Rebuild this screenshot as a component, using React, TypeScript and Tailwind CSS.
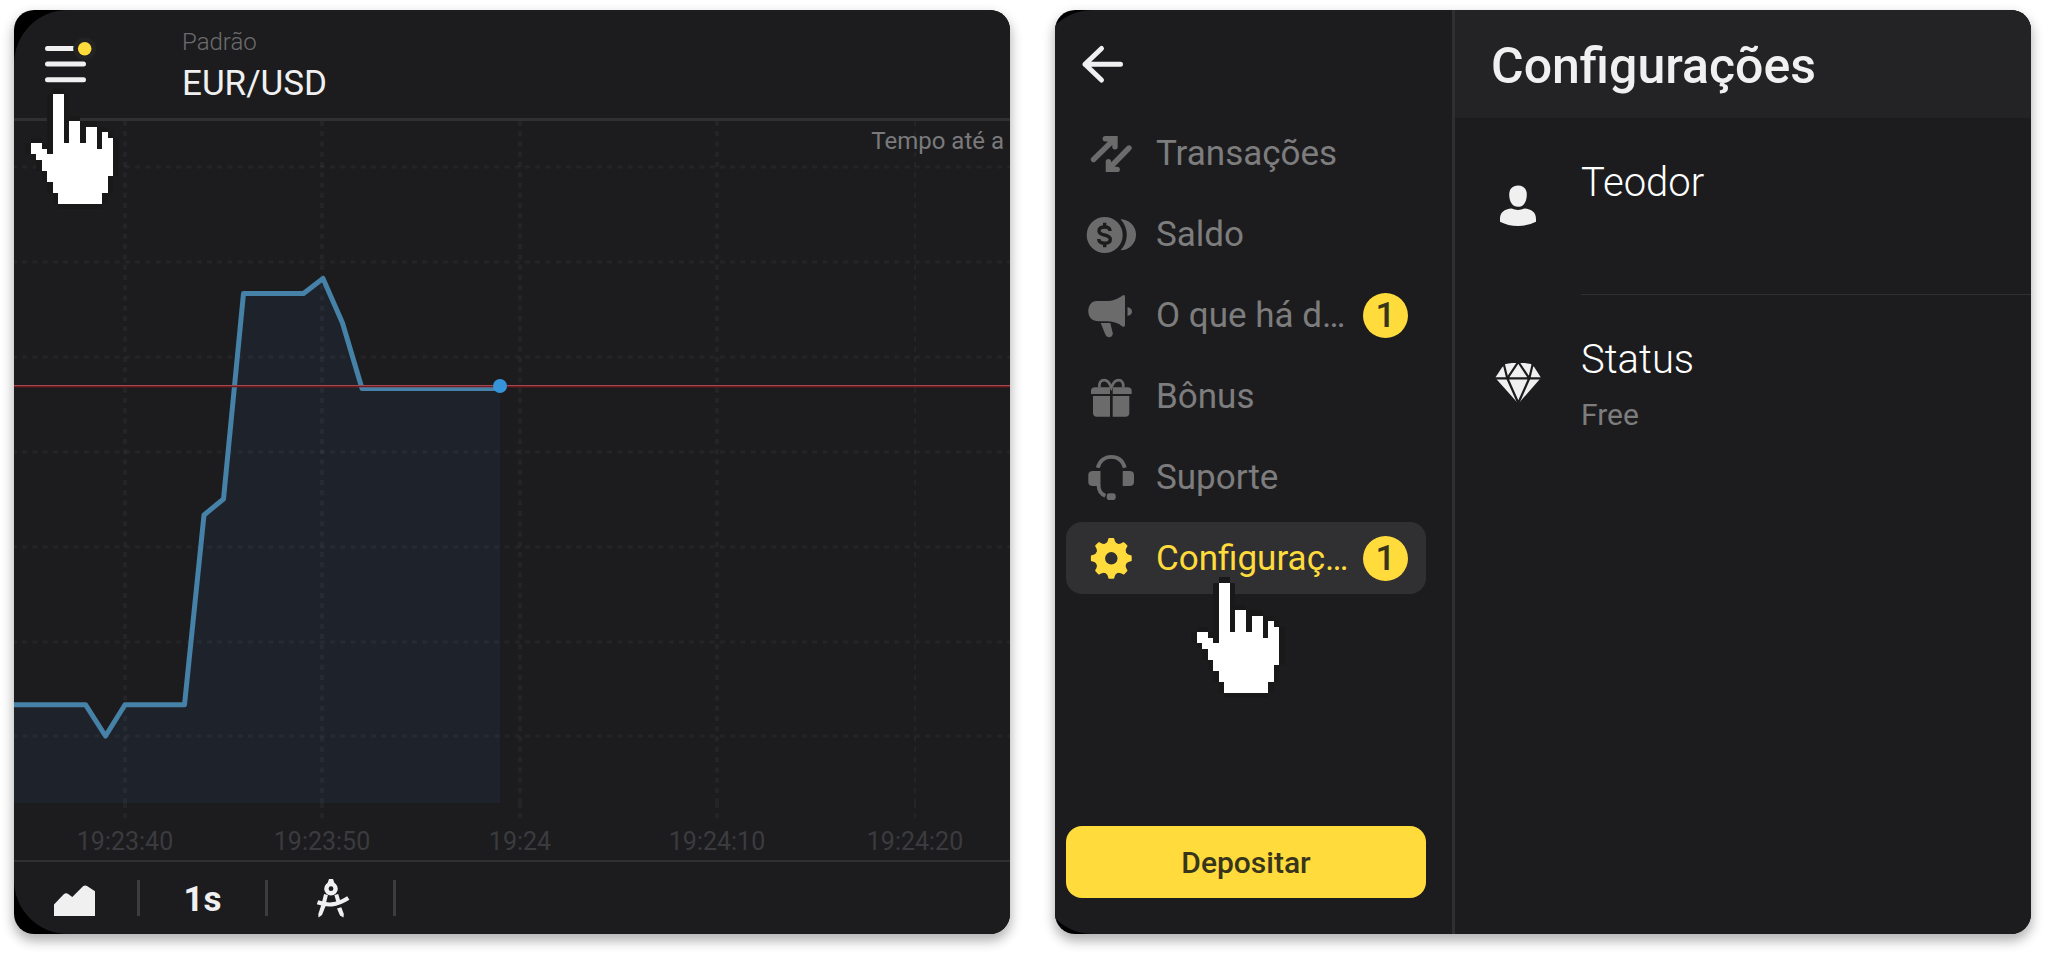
import type { ReactNode } from "react"

const TIMES = [
  { x: 111, label: "19:23:40", width: 4 },
  { x: 308, label: "19:23:50", width: 4 },
  { x: 506, label: "19:24", width: 4 },
  { x: 703, label: "19:24:10", width: 4 },
  { x: 901, label: "19:24:20", width: 2 },
]

const LEVELS = [46, 141, 236, 331, 426, 521, 615]

const PRICE =
  "0,583.7 71.5,583.7 91.5,615 111,583.7 170.5,583.7 190,394 209.5,378 229.5,172.5 289.5,172.5 309,157.5 328.5,202 348,267.5 486,267.5"

export default function App() {
  return (
    <main className="flex min-h-screen gap-[45px] bg-white pt-[10px] pr-[17px] pb-[21px] pl-[14px] font-[Roboto,sans-serif]">
      <Card className="flex-[996]">
        <div className="flex flex-1 flex-col overflow-hidden rounded-l-[54px] bg-[#1c1c1e]">
          <ChartHeader />
          <PriceChart />
          <ChartToolbar />
        </div>
        <HandPointer className="top-[78px] left-[11px]" />
      </Card>
      <Card className="flex-[976]">
        <div className="-ml-4 flex flex-1 overflow-hidden rounded-l-[54px] bg-[#1c1c1e] pl-4">
          <Sidebar />
          <Settings />
        </div>
        <HandPointer className="top-[567px] left-[136px]" />
      </Card>
    </main>
  )
}

function Card({
  className,
  children,
}: {
  className: string
  children: ReactNode
}) {
  return (
    <section
      className={`relative flex min-w-0 basis-0 rounded-[20px] shadow-[0_6px_12px_1px_rgba(0,0,0,0.3)] ${className}`}
    >
      <div className="flex min-w-0 flex-1 overflow-hidden rounded-[20px] bg-black">
        {children}
      </div>
    </section>
  )
}

function ChartHeader() {
  return (
    <header className="flex h-[111px] items-start border-b-[3px] border-[#303032] pt-[18px] pl-[31px]">
      <button aria-label="Menu" className="mt-[9px] cursor-pointer">
        <svg width="52" height="48" viewBox="0 0 52 48">
          <g stroke="#f0f0f1" strokeWidth="5" strokeLinecap="round">
            <path d="M2.5 11.5H30M2.5 27H38.5M2.5 42.7H38.5" />
          </g>
          <circle cx="39.7" cy="11.7" r="11.5" fill="#232324" />
          <circle cx="39.7" cy="11.7" r="6.8" fill="#ffdb3b" />
        </svg>
      </button>
      <div className="ml-[85px]">
        <p className="text-[24px] leading-[28px] font-light text-[#6c6c6e]">
          Padrão
        </p>
        <h1 className="mt-2 text-[35px] leading-[40px] text-[#f0f0f1]">
          EUR/USD
        </h1>
      </div>
    </header>
  )
}

function PriceChart() {
  return (
    <div className="relative min-h-[739px] flex-1">
      <svg
        className="absolute inset-0 size-full"
        viewBox="0 0 996 739"
        preserveAspectRatio="xMinYMin slice"
      >
        <polygon points={`0,682 ${PRICE} 486,682`} fill="#1e232b" />

        {/* grid */}
        <g stroke="#fff" strokeOpacity="0.04" strokeDasharray="5 5.26">
          {LEVELS.map((y) => (
            <line
              key={y}
              x1="-2"
              x2="996"
              y1={y}
              y2={y}
              strokeWidth="3"
            />
          ))}
          {TIMES.map(({ x, width }) => (
            <g key={x} strokeWidth={width}>
              <line x1={x} x2={x} y1="0" y2="682" />
              <line x1={x} x2={x} y1="682" y2="698" />
            </g>
          ))}
        </g>

        <polyline
          points={PRICE}
          fill="none"
          stroke="#4681a8"
          strokeWidth="5"
          strokeLinejoin="round"
        />

        {/* current price */}
        <rect y="264" width="996" height="1" fill="#a1494f" />
        <rect y="265" width="996" height="1" fill="#6d1c21" />
        <rect y="266" width="996" height="1" fill="#8a1c21" opacity="0.3" />
        <circle cx="486" cy="265" r="7" fill="#3694da" />

        <g fill="#3b3b3f" fontSize="25" textAnchor="middle">
          {TIMES.map(({ x, label }) => (
            <text key={label} x={x} y="729">
              {label}
            </text>
          ))}
        </g>
      </svg>
      <p className="relative pt-1.5 pr-[6px] text-right text-[24px] leading-[28px] text-[#7a7a7c]">
        Tempo até a
      </p>
    </div>
  )
}

function ChartToolbar() {
  return (
    <footer className="flex h-[74px] items-center border-t-2 border-[#303032] text-[#f0f0f1]">
      <button
        aria-label="Tipo de gráfico"
        className="flex h-9 w-[126px] cursor-pointer items-center justify-center border-r-[3px] border-[#3c3c3e] pr-0.5"
      >
        <svg width="42" height="36" viewBox="0 0 42 36" fill="currentColor">
          <path d="M0 24.5L9.5 14.5Q12 12.5 14.2 14L18.3 17L29 6.3Q31 5 33 6L41 11.3V36H0Z" />
        </svg>
      </button>
      <button className="flex h-9 w-[128px] cursor-pointer items-center justify-center border-r-[3px] border-[#3c3c3e] pt-1 text-[35px] leading-[40px] font-bold">
        1s
      </button>
      <button
        aria-label="Desenho"
        className="flex h-9 w-[128px] cursor-pointer items-center justify-center border-r-[3px] border-[#3c3c3e]"
      >
        <svg
          width="40"
          height="42"
          viewBox="-2 0 40 42"
          fill="none"
          stroke="currentColor"
        >
          <path d="M16 2H20L22.5 9H13.5Z" fill="currentColor" stroke="none" />
          <circle cx="18" cy="11.7" r="4.6" strokeWidth="4.4" />
          <path d="M13 17.5L11 25.5M23.3 17.5L25.5 25" strokeWidth="4" />
          <path d="M4.5 25.3Q12 28 19 27.4T35.3 21" strokeWidth="4.2" />
          <path
            d="M8.3 28L12.6 29L9 38L5.5 40.5L5.3 37Z M24 31.5L28.3 30.3L30.8 37L30.5 40.5L27 38.6Z"
            fill="currentColor"
            stroke="none"
          />
        </svg>
      </button>
    </footer>
  )
}

function Sidebar() {
  return (
    <aside className="flex w-[400px] shrink-0 flex-col border-r-[3px] border-[#2f2f31] pr-[26px] pl-[11px]">
      <div className="flex h-[107px] items-center pl-[15px]">
        <button aria-label="Voltar" className="cursor-pointer">
          <svg
            width="44"
            height="40"
            viewBox="0 0 44 40"
            fill="none"
            stroke="#f0f0f1"
            strokeWidth="5"
            strokeLinecap="round"
            strokeLinejoin="round"
          >
            <path d="M4 20.3H39.5M20.5 4.5L4 20.3L20.5 36" />
            <path d="M4 20.3L9 16V24.6Z" fill="#f0f0f1" strokeWidth="1" />
          </svg>
        </button>
      </div>
      <nav className="flex flex-col gap-[9px]">
        <NavItem icon={<TransfersIcon />} label="Transações" />
        <NavItem icon={<CoinsIcon />} label="Saldo" />
        <NavItem icon={<MegaphoneIcon />} label="O que há d…" badge={1} />
        <NavItem icon={<GiftIcon />} label="Bônus" />
        <NavItem icon={<HeadsetIcon />} label="Suporte" />
        <NavItem icon={<GearIcon />} label="Configuraç…" badge={1} active />
      </nav>
      <button className="mt-auto mb-9 h-[72px] cursor-pointer rounded-[16px] bg-[#ffdb3b] pt-0.5 text-[30px] leading-[36px] font-medium text-[#38351d]">
        Depositar
      </button>
    </aside>
  )
}

function NavItem({
  icon,
  label,
  badge,
  active = false,
}: {
  icon: ReactNode
  label: string
  badge?: number
  active?: boolean
}) {
  return (
    <a
      href="#"
      className={`flex h-[72px] items-center rounded-[16px] pr-[18px] pl-5 text-[35px] leading-[40px] ${
        active ? "bg-[#303032] text-[#ffdb3b]" : "text-[#7d7d7e]"
      }`}
    >
      <span className={active ? "" : "text-[#6b6b6c]"}>{icon}</span>
      <span className="ml-5 flex-1 pt-0.5 whitespace-nowrap">{label}</span>
      {badge && (
        <span className="flex size-[45px] items-center justify-center rounded-full bg-[#ffdb3b] pt-0.5 font-medium text-[#38351d]">
          {badge}
        </span>
      )}
    </a>
  )
}

function Settings() {
  return (
    <div className="min-w-0 flex-1">
      <header className="flex h-[108px] items-center bg-[#232325] pt-1 pl-9">
        <h2 className="text-[50px] leading-[56px] font-medium text-[#f0f0f1]">
          Configurações
        </h2>
      </header>
      <SettingsRow icon={<PersonIcon />} title="Teodor" divider />
      <SettingsRow icon={<DiamondIcon />} title="Status" text="Free" />
    </div>
  )
}

function SettingsRow({
  icon,
  title,
  text,
  divider = false,
}: {
  icon: ReactNode
  title: string
  text?: string
  divider?: boolean
}) {
  return (
    <div className="flex h-[177px] items-center pl-[39px]">
      {icon}
      <div
        className={`ml-[39px] flex-1 self-stretch border-b pt-[41px] ${
          divider ? "border-[#303032]" : "border-transparent"
        }`}
      >
        <p className="text-[40px] leading-[48px] font-light text-white">
          {title}
        </p>
        {text && (
          <p className="mt-[11px] text-[30px] leading-[40px] text-[#7d7d7e]">
            {text}
          </p>
        )}
      </div>
    </div>
  )
}

function Icon({ children }: { children: ReactNode }) {
  return (
    <svg width="50" height="50" viewBox="0 0 50 50" fill="currentColor">
      {children}
    </svg>
  )
}

function TransfersIcon() {
  return (
    <Icon>
      <g
        fill="none"
        stroke="currentColor"
        strokeWidth="5.4"
        strokeLinecap="round"
      >
        <path d="M7.5 31.5L28.5 11M19.3 10.7H29V18.8" />
        <path d="M43 20L23 40.5M22.4 33.8V41.4H31.2" />
      </g>
    </Icon>
  )
}

function CoinsIcon() {
  return (
    <Icon>
      <circle cx="18.7" cy="26" r="18" />
      <path d="M34.5 10.3A15.5 15.5 0 0 1 34.5 41.3A22.3 22.3 0 0 0 34.5 10.3Z" />
      <path
        d="M18.7 13.7V18M18.7 34V38.3M24 22C24 19.3 21.8 18 18.5 18S13 19.5 13 21.9S15.5 25.2 18.5 26S24.3 27.6 24.3 30.2S22 34.2 18.7 34.2S12.7 33 12.7 30"
        fill="none"
        stroke="#1c1c1e"
        strokeWidth="3.4"
      />
    </Icon>
  )
}

function MegaphoneIcon() {
  return (
    <Icon>
      <path d="M11 11H20C27 11 32 8.5 36.5 5.4Q39 4 39 7V35Q39 37.6 36.3 36.4C32 33 27 31.3 20 31.3H13C6 31.3 2.3 27 2.3 21.5S5 11 11 11Z" />
      <path d="M14.7 33H24.3L26.8 43.5Q26.6 47 22.8 47.3Q20.5 47 19.3 44.5Z" />
      <path d="M41.5 17Q46 18 46 21.5T41.5 26Z" />
    </Icon>
  )
}

function GiftIcon() {
  return (
    <Icon>
      <path d="M5 23V20Q5 16.3 9 16.3H24V23ZM26.7 23V16.3H41.7Q45.7 16.3 45.7 20V23Z" />
      <path d="M7 25H24V45.7H11Q7 45.7 7 41.7ZM26.7 25H43.3V41.7Q43.3 45.7 39.3 45.7H26.7Z" />
      <path
        d="M13.5 16.5C12.5 11.5 15 9.2 18.3 9.2S23.5 11.8 25.3 16.5C27.2 11.8 29 9.2 32.3 9.2S38 11.5 37.2 16.5"
        fill="none"
        stroke="currentColor"
        strokeWidth="2.8"
      />
    </Icon>
  )
}

function HeadsetIcon() {
  return (
    <Icon>
      <g fill="none" stroke="currentColor" strokeWidth="3.8">
        <path d="M11.8 15.8C13.5 9 18.5 4.8 25.3 4.8S37 9 38.8 15.8" />
        <path d="M12.5 33C12.5 38.5 15 42 19.3 43.8" />
      </g>
      <path d="M7 19H14.5V34H7Q2.3 34 2.3 30V23Q2.3 19 7 19Z" />
      <path d="M36.7 19H43.5Q48 19 48 23V30Q48 34 43.5 34H36.7Z" />
      <rect x="20.7" y="41.3" width="9" height="6.7" rx="2.8" />
    </Icon>
  )
}

function GearIcon() {
  return (
    <Icon>
      <g transform="translate(25.3 25.3)">
        {[0, 45, 90, 135, 180, 225, 270, 315].map((angle) => (
          <path
            key={angle}
            d="M-7 -14Q-3.6 -15.5 -3 -19.6Q-2.8 -20.4 -2 -20.4H2Q2.8 -20.4 3 -19.6Q3.6 -15.5 7 -14Z"
            transform={`rotate(${angle})`}
          />
        ))}
        <circle r="11" fill="none" stroke="currentColor" strokeWidth="9.5" />
      </g>
    </Icon>
  )
}

function PersonIcon() {
  return (
    <svg width="48" height="48" viewBox="-2 1 48 48" fill="#f0f0f1">
      <path d="M22 3.5C27.5 3.5 30.8 7 30.8 12.5C30.8 20 27.3 24.8 22 24.8S13.2 20 13.2 12.5C13.2 7 16.5 3.5 22 3.5Z" />
      <path d="M4 39.7V37C4 30.5 8.5 27 15.5 26.6Q22 29.5 28.5 26.6C35.5 27 40 30.5 40 37V39.7Q32 43.9 22 43.9T4 39.7Z" />
    </svg>
  )
}

function DiamondIcon() {
  return (
    <svg width="48" height="48" viewBox="0 0 48 48">
      <path
        d="M1.2 17.7L8 7.5L11.5 4L18 3H30.5L37 4L40.5 7.5L47 17.7L25.3 42.5H23.3Z"
        fill="#f0f0f1"
      />
      <path
        d="M0 18.3H48M9.5 3L13.3 18.3L24.3 43L35.3 18.3L39 3M13.3 18.3L24.3 2L35.3 18.3"
        fill="none"
        stroke="#1c1c1e"
        strokeWidth="2.2"
      />
    </svg>
  )
}

const HAND =
  "M4 0H6V9H7V5H9V9H10V6H12V10H13V7H14V8H15V15H14V18H13V20H5V18H4V16H3V14H2V12H1V11H0V9H2V10H3V11H4Z"

function HandPointer({ className }: { className: string }) {
  return (
    <svg
      aria-hidden
      width="94"
      height="121"
      viewBox="-1 -1 17 22"
      shapeRendering="crispEdges"
      className={`pointer-events-none absolute ${className}`}
    >
      <g fill="#19191a">
        <path d={HAND} transform="translate(-1 0)" />
        <path d={HAND} transform="translate(1 0)" />
        <path d={HAND} transform="translate(0 -1)" />
        <path d={HAND} transform="translate(0 1)" />
      </g>
      <path d={HAND} fill="#fff" />
    </svg>
  )
}
